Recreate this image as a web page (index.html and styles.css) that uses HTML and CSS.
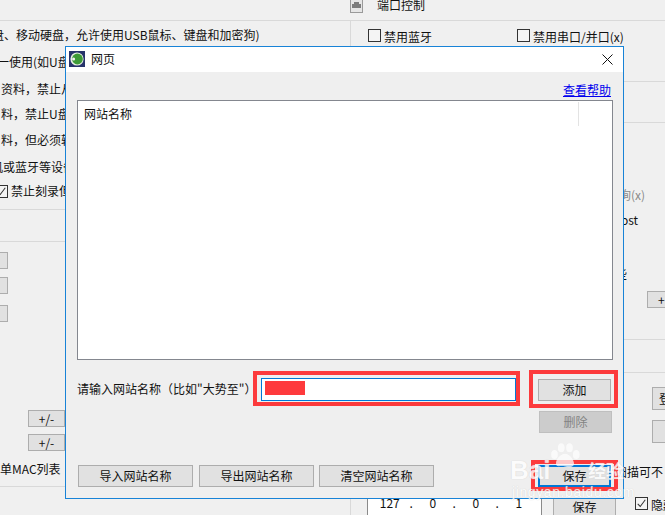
FILE: index.html
```html
<!DOCTYPE html>
<html lang="zh-CN">
<head>
<meta charset="utf-8">
<title>网页</title>
<link rel="stylesheet" href="styles.css">
</head>
<body>
<div class="screen">
  <section class="left">
    <div class="left-lines">
      <div class="line shift-a">盘、移动硬盘，允许使用USB鼠标、键盘和加密狗)</div>
      <div class="line shift-b">一使用(如U盘</div>
      <div class="line shift-c">资料，禁止从</div>
      <div class="line shift-c">料，禁止U盘</div>
      <div class="line shift-c">料，但必须转</div>
      <div class="line shift-d">机或蓝牙等设备</div>
      <div class="line shift-e"><span class="check on"><svg viewBox="0 0 13 13"><path d="M2 7l3 3 6-8" fill="none" stroke="#333" stroke-width="1.2"/></svg></span>禁止刻录但</div>
    </div>
    <div class="rule rule-a"></div>
    <div class="side-buttons">
      <span class="btn stub"></span>
      <span class="btn stub"></span>
      <span class="btn stub"></span>
    </div>
    <div class="plus-buttons">
      <span class="btn plus">+/-</span>
      <span class="btn plus">+/-</span>
    </div>
    <div class="line mac">单MAC列表</div>
    <div class="rule rule-b"></div>
  </section>

  <section class="right">
    <header class="port-head">
      <svg class="port-icon" viewBox="0 0 13 14"><rect x=".5" y=".5" width="12" height="13" fill="#e6e6e6" stroke="#9a9a9a"/><path d="M2 9V5h2V3h5v2h2v4z" fill="#7c7c7c"/></svg>
      <span>端口控制</span>
    </header>
    <div class="group">
      <div class="checks">
        <label class="check-item bt"><span class="check"></span>禁用蓝牙</label>
        <label class="check-item"><span class="check"></span>禁用串口/并口(x)</label>
      </div>
    </div>
    <div class="far band-a"></div>
    <div class="far band-b"></div>
    <div class="far line grey">询(x)</div>
    <div class="far line ost">ost</div>
    <div class="far line tick">些</div>
    <div class="far add-row"><span class="btn add-stub">+</span></div>
    <div class="far band-c"></div>
    <div class="far band-d"></div>
    <div class="far big-buttons">
      <span class="btn big">登</span>
      <span class="btn big"></span>
    </div>
    <div class="far line scan">扫描可不</div>
    <div class="ip-row">
      <div class="ip"><span>127</span><span>.</span><span>0</span><span>.</span><span>0</span><span>.</span><span>1</span></div>
      <span class="btn ip-save">保存</span>
      <label class="check-item hide"><span class="check on"><svg viewBox="0 0 13 13"><path d="M2 7l3 3 6-8" fill="none" stroke="#333" stroke-width="1.2"/></svg></span>隐藏</label>
    </div>
  </section>

  <div class="dialog">
    <div class="titlebar">
      <svg class="app-icon" viewBox="0 0 16 16"><rect width="16" height="16" fill="#27336b"/><circle cx="8" cy="8" r="6.6" fill="#e6eee2"/><circle cx="8.4" cy="8" r="5.4" fill="#3d9a36"/><circle cx="4.6" cy="8" r="1.5" fill="#f2f2f2"/></svg>
      <span class="title">网页</span>
      <svg class="close" viewBox="0 0 11 11"><path d="M.5.5l10 10M10.5.5l-10 10" stroke="#111" fill="none"/></svg>
    </div>
    <div class="dialog-body">
      <div class="help"><a href="#">查看帮助</a></div>
      <div class="list">
        <div class="list-head">
          <span class="col-name">网站名称</span>
          <span class="col-sep"></span>
        </div>
      </div>
      <div class="entry">
        <label class="entry-label">请输入网站名称（比如"大势至"）</label>
        <div class="input"><span class="redact"></span></div>
        <span class="btn act">添加</span>
      </div>
      <div class="delete-row"><span class="btn act off">删除</span></div>
      <div class="foot">
        <span class="btn wide">导入网站名称</span>
        <span class="btn wide">导出网站名称</span>
        <span class="btn wide">清空网站名称</span>
        <span class="btn act focus">保存</span>
      </div>
    </div>
    <div class="mark mark-input"></div>
    <div class="mark mark-add"></div>
    <div class="mark mark-save"></div>
  </div>

  <div class="watermark">
    <svg class="paw" viewBox="0 0 40 34"><g fill="#fff"><ellipse cx="6" cy="15" rx="4.5" ry="6"/><ellipse cx="15" cy="6" rx="4.5" ry="6"/><ellipse cx="26" cy="6" rx="4.5" ry="6"/><ellipse cx="35" cy="15" rx="4.5" ry="6"/><path d="M20 14c6 0 12 8 12 13s-6 6-12 4-12 2-12-4 6-13 12-13z"/></g></svg>
    <div class="wm-brand"><span class="wm-bai">Bai</span><span class="wm-cn">经验</span></div>
    <div class="wm-url">jingyan.baidu.com</div>
  </div>
</div>
</body>
</html>
```
FILE: styles.css
```css
* { box-sizing: border-box; }
html, body { margin: 0; padding: 0; }
body { background: #f0f0f0; }
.screen {
  position: relative;
  width: 665px;
  height: 515px;
  overflow: hidden;
  display: flex;
  background: #f0f0f0;
  font: 12px/16px "Noto Sans CJK SC", "Liberation Sans", sans-serif;
  color: #111;
}
.line { white-space: nowrap; }
.btn {
  display: flex;
  align-items: center;
  justify-content: center;
  background: #e1e1e1;
  border: 1px solid #adadad;
  color: #111;
  flex: none;
}
.check {
  display: inline-block;
  flex: none;
  width: 13px;
  height: 13px;
  border: 1px solid #333;
  background: #f4f4f4;
}
.check svg { display: block; width: 11px; height: 11px; }

/* left background panel */
.left { flex: none; width: 350px; padding-top: 20px; overflow: hidden; }
.left-lines {
  border-top: 1px solid #d9d9d9;
  display: grid;
  grid-template-rows: 28px 26px 28px 22px 30px 24px 24px;
  align-items: center;
  height: 189px;
}
.shift-a { margin-left: -8px; }
.shift-b { margin-left: -3px; }
.shift-c { margin-left: 1px; }
.shift-d { margin-left: -9px; }
.shift-e { margin-left: -5px; display: flex; align-items: center; gap: 3px; }
.rule { height: 1px; background: #d9d9d9; }
.rule-a { box-shadow: 0 32px 0 #d9d9d9; }
.side-buttons { display: flex; flex-direction: column; margin-top: 42px; margin-left: -10px; }
.stub { width: 18px; height: 17px; }
.stub + .stub { margin-top: 8px; }
.stub + .stub + .stub { margin-top: 11px; }
.plus-buttons { margin-top: 88px; margin-left: 28px; display: flex; flex-direction: column; gap: 7px; }
.plus { width: 37px; height: 17px; }
.mac { margin-top: 10px; height: 16px; }
.rule-b { margin-top: 9px; }

/* right background panel */
.right { flex: none; width: 315px; display: flex; flex-direction: column; overflow: hidden; }
.port-head { display: flex; align-items: center; height: 20px; margin-top: -5px; margin-bottom: 5px; gap: 14px; flex: none; }
.port-icon { width: 13px; height: 14px; flex: none; margin-top: 2px; }
.group { flex: none; height: 61px; border: 1px solid #d9d9d9; border-right: 0; border-bottom: 0; padding: 8px 0 0 17px; }
.checks { display: flex; }
.check-item { display: flex; align-items: center; gap: 3px; white-space: nowrap; height: 16px; }
.check-item .check { align-self: flex-start; }
.bt { width: 149px; }
.far { flex: none; margin-left: 273px; white-space: nowrap; }
.band-a { height: 41px; border-top: 1px solid #d9d9d9; }
.band-b { height: 65px; border-top: 1px solid #d9d9d9; }
.grey { height: 16px; color: #8a8a8a; margin-left: 269px; }
.ost { height: 16px; margin-top: 9px; margin-left: 271px; }
.tick { height: 16px; margin-top: 38px; margin-left: 265px; }
.add-row { margin-top: 9px; margin-left: 297px; }
.add-stub { width: 30px; height: 17px; justify-content: flex-start; padding-left: 10px; }
.band-c { height: 33px; margin-top: 31px; border-top: 1px solid #d9d9d9; }
.band-d { height: 15px; border-top: 1px solid #d9d9d9; }
.big-buttons { margin-left: 302px; display: flex; flex-direction: column; gap: 10px; }
.big { width: 30px; height: 23px; justify-content: flex-start; padding-left: 6px; }
.scan { height: 16px; margin-top: 21px; margin-left: 265px; }
.ip-row {
  flex: none;
  display: flex;
  align-items: flex-start;
  margin-top: 18px;
  height: 30px;
  border-left: 1px solid #d9d9d9;
  padding-left: 16px;
}
.ip {
  flex: none;
  width: 175px;
  height: 20px;
  background: #fff;
  border-left: 1px solid #8a8a8a;
  border-right: 1px solid #8a8a8a;
  display: grid;
  grid-template-columns: repeat(7, 21.5px);
  justify-items: center;
  line-height: 10px;
  padding-left: 11px;
}
.ip-save { width: 63px; height: 18px; margin-left: 11px; padding-bottom: 1px; }
.hide { margin-left: 19px; margin-top: -1px; }

/* dialog */
.dialog {
  position: absolute;
  left: 65px;
  top: 46px;
  width: 559px;
  height: 453px;
  background: #efefef;
  border: 1px solid #1883d7;
  display: flex;
  flex-direction: column;
}
.titlebar { flex: none; height: 25px; background: #fff; display: flex; align-items: center; padding: 0 10px 1px 3px; }
.app-icon { width: 16px; height: 16px; flex: none; }
.title { margin-left: 6px; flex: 1; }
.close { width: 11px; height: 11px; margin-right: 0; }
.dialog-body { flex: 1; padding: 0 10px 0 11px; display: flex; flex-direction: column; }
.help { height: 28px; display: flex; justify-content: flex-end; align-items: center; padding-right: 2px; padding-top: 8px; }
.help a { color: #0000ee; }
.list { flex: none; height: 260px; background: #fff; border: 1px solid #84878f; }
.list-head { display: flex; align-items: flex-start; height: 24px; padding: 1px 0 0 6px; }
.col-name { width: 494px; line-height: 24px; }
.col-sep { width: 1px; height: 24px; background: #e3e3e3; }
.entry { margin-top: 18px; display: flex; align-items: flex-start; height: 23px; }
.entry-label { width: 184px; white-space: nowrap; line-height: 21px; }
.input { width: 255px; height: 23px; background: #fff; border: 1px solid #0078d7; padding: 2px 3px; }
.redact { display: block; width: 40px; height: 14px; background: #fe3a3c; }
.act { width: 73px; height: 22px; }
.entry .act { margin-left: 22px; margin-top: 1px; }
.delete-row { margin-top: 10px; display: flex; justify-content: flex-end; padding-right: 1px; }
.off { background: #cccccc; border-color: #bfbfbf; color: #838383; }
.foot { margin-top: 32px; display: flex; align-items: center; padding-left: 1px; gap: 6px; }
.wide { width: 115px; height: 22px; }
.wide + .wide + .wide { margin-left: -1px; margin-right: 98px; }
.focus { height: 22px; border: 2px solid #0078d7; }

.mark { position: absolute; border: 4px solid #fc3a3c; }
.mark-input { left: 187px; top: 324px; width: 267px; height: 35px; }
.mark-add { left: 463px; top: 323px; width: 89px; height: 38px; }
.mark-save { left: 465px; top: 413px; width: 87px; height: 31px; }

/* watermark */
.watermark {
  position: absolute;
  left: 510px;
  top: 443px;
  width: 122px;
  display: flex;
  flex-direction: column;
  align-items: flex-start;
  opacity: .8;
  color: #fff;
  text-shadow: 0 0 1px #c4c4c4;
}
.paw { position: absolute; left: 40px; top: 0; width: 30px; height: 26px; opacity: .9; }
.wm-brand { display: flex; align-items: center; height: 20px; margin-top: 17px; font-family: "Liberation Sans", sans-serif; font-weight: 700; }
.wm-bai { font-size: 26px; width: 78px; }
.wm-cn { font-family: "Noto Sans CJK SC", sans-serif; font-size: 18px; font-weight: 700; white-space: nowrap; }
.wm-url { font-family: "Liberation Sans", sans-serif; font-size: 14px; line-height: 14px; margin-top: 5px; margin-left: 2px; letter-spacing: .6px; white-space: nowrap; }
```
